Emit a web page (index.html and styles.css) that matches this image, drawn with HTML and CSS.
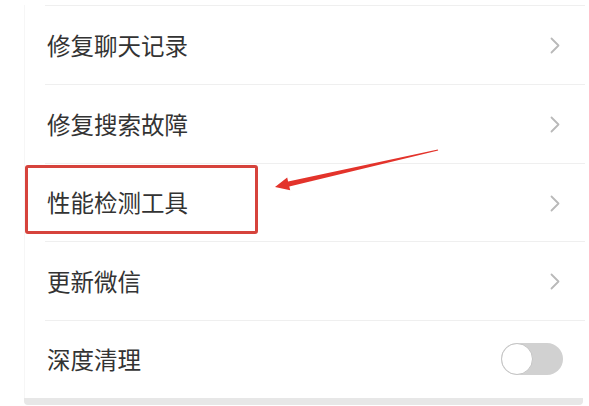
FILE: index.html
```html
<!DOCTYPE html>
<html lang="zh-CN">
<head>
<meta charset="utf-8">
<title>设置</title>
<link rel="stylesheet" href="styles.css">
</head>
<body>
<div class="page">
  <div class="card">
    <div class="row">
      <span class="label">修复聊天记录</span>
      <svg class="chev" viewBox="0 0 10 17" width="10" height="17"><path d="M1.5 1.5 L8.5 8.5 L1.5 15.5" fill="none" stroke="#b9b9b9" stroke-width="1.8" stroke-linecap="round" stroke-linejoin="round"/></svg>
    </div>
    <div class="row">
      <span class="label">修复搜索故障</span>
      <svg class="chev" viewBox="0 0 10 17" width="10" height="17"><path d="M1.5 1.5 L8.5 8.5 L1.5 15.5" fill="none" stroke="#b9b9b9" stroke-width="1.8" stroke-linecap="round" stroke-linejoin="round"/></svg>
    </div>
    <div class="row short">
      <span class="label">性能检测工具</span>
      <svg class="chev" viewBox="0 0 10 17" width="10" height="17"><path d="M1.5 1.5 L8.5 8.5 L1.5 15.5" fill="none" stroke="#b9b9b9" stroke-width="1.8" stroke-linecap="round" stroke-linejoin="round"/></svg>
    </div>
    <div class="row">
      <span class="label">更新微信</span>
      <svg class="chev" viewBox="0 0 10 17" width="10" height="17"><path d="M1.5 1.5 L8.5 8.5 L1.5 15.5" fill="none" stroke="#b9b9b9" stroke-width="1.8" stroke-linecap="round" stroke-linejoin="round"/></svg>
    </div>
    <div class="row short">
      <span class="label">深度清理</span>
      <span class="toggle"><span class="knob"></span></span>
    </div>
  </div>
  <div class="card-foot"></div>

  <div class="highlight"></div>
  <svg class="arrow" width="589" height="406" viewBox="0 0 589 406">
    <polygon fill="#e3332b" points="275,187 290.2,190.3 289.3,186.4 438.2,150.6 437.8,149.4 288.1,181.4 287.2,177.6"/>
  </svg>
</div>
</body>
</html>
```
FILE: styles.css
```css
html, body {
  margin: 0;
  padding: 0;
  background: #ffffff;
}

.page {
  position: relative;
  width: 589px;
  height: 406px;
  overflow: hidden;
  padding-top: 5px;
  box-sizing: border-box;
  font-family: "Noto Sans CJK SC", "Noto Sans", sans-serif;
}

.card {
  margin-left: 24px;
  width: 560px;
  border-left: 1px solid #f6f6f6;
  background: #ffffff;
}

.row {
  height: 79px;
  box-sizing: border-box;
  display: flex;
  align-items: center;
  justify-content: space-between;
  padding: 2px 25px 0 22px;
  background: linear-gradient(#efefef, #efefef) 20px 0 / calc(100% - 20px) 1px no-repeat;
}

.row.short {
  height: 78px;
}

.label {
  font-size: 23.5px;
  color: #333333;
  letter-spacing: 0;
  line-height: 1;
}

.chev {
  display: block;
}

.toggle {
  position: relative;
  width: 62px;
  height: 32px;
  border-radius: 16px;
  background: #d1d1d1;
  margin-right: -3px;
  margin-top: -2px;
}

.knob {
  position: absolute;
  left: 0;
  top: 0;
  width: 30px;
  height: 30px;
  border-radius: 50%;
  background: #ffffff;
  border: 1px solid #c4c4c4;
}

.card-foot {
  margin-left: 24px;
  width: 559px;
  height: 7px;
  background: #e7e7e7;
  border-radius: 0 0 4px 4px;
}

.highlight {
  position: absolute;
  left: 25px;
  top: 165px;
  width: 233px;
  height: 69px;
  box-sizing: border-box;
  border: 3px solid #d6433c;
  border-radius: 3px;
}

.arrow {
  position: absolute;
  left: 0;
  top: 0;
}
```
